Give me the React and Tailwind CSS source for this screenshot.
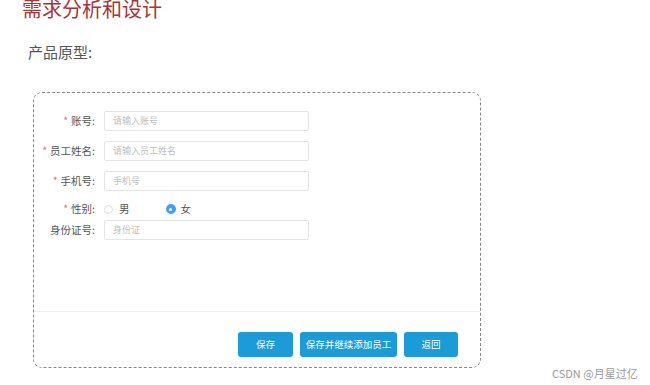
const font = { fontFamily: '"Microsoft YaHei", "Noto Sans CJK SC", "Liberation Sans", sans-serif' };

const Field = ({ label, required, placeholder }) => (
  <div className="flex items-center h-[20px]">
    <div className="w-[62px] text-right text-[10.5px] text-[#555] pr-[1px] whitespace-nowrap">
      {required && <span className="text-[#f56c6c] mr-[3px]">*</span>}
      {label}:
    </div>
    <div className="ml-[8px] w-[205px] h-[20px] border border-[#e4e4e4] rounded-[2px] bg-white flex items-center pl-[8px] text-[9px] text-[#c0c0c0]">
      {placeholder}
    </div>
  </div>
);

export default function App() {
  return (
    <div className="relative w-[650px] h-[385px] overflow-hidden bg-white" style={font}>
      <div className="pl-[22px] mt-[-4px] text-[20px] leading-[26px] text-[#a83535]">需求分析和设计</div>
      <div className="pl-[28px] mt-[20px] text-[15px] leading-[20px] text-[#555]">产品原型:</div>

      <div className="ml-[33px] mt-[30px] w-[448px] h-[276px] border border-dashed border-[#888] rounded-[9px] flex flex-col">
        <div className="flex-1 pt-[18px] flex flex-col">
          <Field label="账号" required placeholder="请输入账号" />
          <div className="h-[10px]" />
          <Field label="员工姓名" required placeholder="请输入员工姓名" />
          <div className="h-[10px]" />
          <Field label="手机号" required placeholder="手机号" />
          <div className="h-[8px]" />
          <div className="flex items-center h-[20px]">
            <div className="w-[62px] text-right text-[10.5px] text-[#555] pr-[1px]">
              <span className="text-[#f56c6c] mr-[3px]">*</span>性别:
            </div>
            <div className="ml-[8px] flex items-center">
              <span className="w-[9px] h-[9px] rounded-full border border-[#ddd] bg-white" />
              <span className="ml-[6px] text-[10.5px] text-[#555]">男</span>
              <span className="ml-[36px] w-[10px] h-[10px] rounded-full border-[3px] border-[#409eff] bg-[#409eff] flex items-center justify-center">
                <span className="w-[3px] h-[3px] rounded-full bg-white" />
              </span>
              <span className="ml-[5px] text-[10.5px] text-[#555]">女</span>
            </div>
          </div>
          <div className="h-[1px]" />
          <Field label="身份证号" placeholder="身份证" />
        </div>
        <div className="border-t border-[#eee] h-[56px] flex items-start justify-end gap-[7px] pt-[20px] pr-[22px]">
          <button className="w-[55px] h-[25px] rounded-[3px] bg-[#1b9bd7] text-white text-[9.5px]">保存</button>
          <button className="w-[97px] h-[25px] rounded-[3px] bg-[#1b9bd7] text-white text-[9.5px]">保存并继续添加员工</button>
          <button className="w-[54px] h-[25px] rounded-[3px] bg-[#1b9bd7] text-white text-[9.5px]">返回</button>
        </div>
      </div>

      <div className="absolute left-[552px] top-[365px] text-[11px] leading-[16px] text-[#9a9a9a]">CSDN @月星过亿</div>
    </div>
  );
}
